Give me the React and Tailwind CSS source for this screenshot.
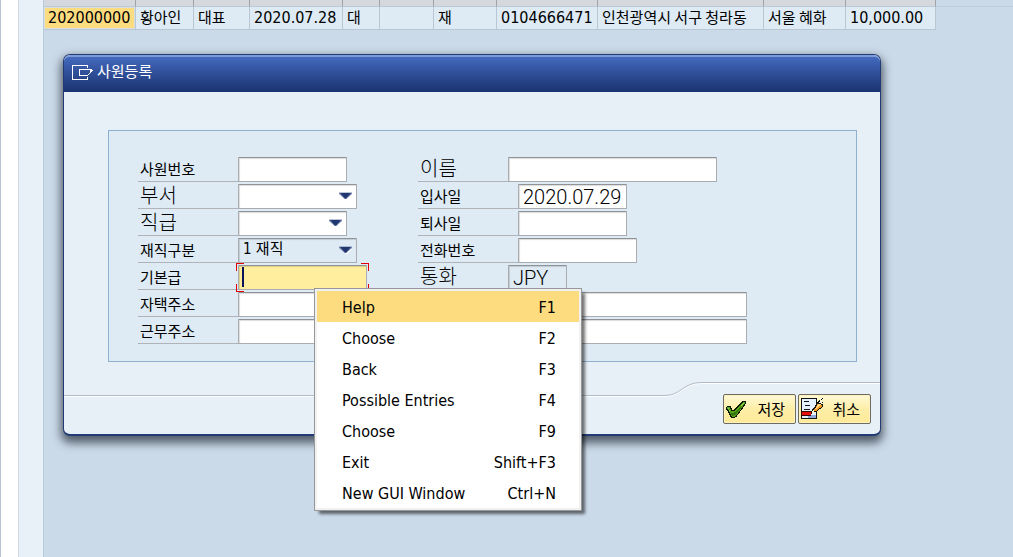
const columns = [
  { id: 'no', width: 'w-[92px]', value: '202000000' },
  { id: 'name', width: 'w-[58px]', value: '황아인', korean: true },
  { id: 'rank', width: 'w-[56px]', value: '대표', korean: true },
  { id: 'joined', width: 'w-[93px]', value: '2020.07.28' },
  { id: 'dept', width: 'w-[37px]', value: '대', korean: true },
  { id: 'left', width: 'w-[54px]', value: '' },
  { id: 'status', width: 'w-[63px]', value: '재', korean: true },
  { id: 'phone', width: 'w-[101px]', value: '0104666471' },
  { id: 'home', width: 'w-[166px]', value: '인천광역시 서구 청라동', korean: true },
  { id: 'office', width: 'w-[82px]', value: '서울 혜화', korean: true },
  { id: 'salary', width: 'w-[90px]', value: '10,000.00' },
];

const menuItems = [
  ['Help', 'F1'],
  ['Choose', 'F2'],
  ['Back', 'F3'],
  ['Possible Entries', 'F4'],
  ['Choose', 'F9'],
  ['Exit', 'Shift+F3'],
  ['New GUI Window', 'Ctrl+N'],
];

const inputStyle =
  "h-[25px] max-w-full rounded-[1px] border border-[#a9adb1] border-t-[#8f9398] px-1 outline-none shadow-[inset_1px_1px_1px_rgba(0,0,0,0.14)]";
const wideLabel = "font-['Noto_Sans_CJK_KR',sans-serif] font-light text-[20px] leading-[22px]";
const wideInput = "font-['Roboto','Noto_Sans_CJK_KR',sans-serif] font-light text-[20px] leading-5";
const small = "font-['Noto_Sans_CJK_KR',sans-serif] text-[15px] leading-6";

function Label({ htmlFor, wide, width = 'w-[100px]', children }) {
  return (
    <label
      htmlFor={htmlFor}
      className={`h-[25px] shrink-0 border-b border-[#b0b4b8] pl-0.5 whitespace-nowrap ${width} ${wide ? wideLabel : small}`}
    >
      {children}
    </label>
  );
}

function TextField({ id, label, wide, labelWidth, width, value = '', tone = 'bg-white' }) {
  return (
    <>
      <Label htmlFor={id} wide={wide} width={labelWidth}>{label}</Label>
      <input id={id} type="text" defaultValue={value} className={`${inputStyle} ${wideInput} ${width} ${tone}`} />
    </>
  );
}

function SelectField({ id, label, wide, width, value = '', tone = 'bg-white' }) {
  return (
    <>
      <Label htmlFor={id} wide={wide}>{label}</Label>
      <div className={`relative ${width}`}>
        <select id={id} className={`block w-full appearance-none pb-1 ${inputStyle} ${tone} font-['DejaVu_Sans_Condensed','Noto_Sans_CJK_KR',sans-serif] text-[15px] leading-5`}>
          <option>{value}</option>
        </select>
        <svg className="pointer-events-none absolute top-2 right-1" width="14" height="8" viewBox="0 0 14 8" aria-hidden="true">
          <path d="M1 2.500h13L8.500 8h-2z" fill="#fff" opacity=".8" />
          <path d="M0 .5h13v1.400L7.300 7H5.700L0 1.900z" fill="#7b8aae" />
          <path d="M1 1h11L7 6.500H6z" fill="#20366f" />
        </svg>
      </div>
    </>
  );
}

function Row({ children, right }) {
  return (
    <div className="flex h-[25px]">
      {right ? <div className="flex w-[280px] shrink-0">{children}</div> : children}
      {right}
    </div>
  );
}

function ContextMenu() {
  return (
    <ul
      role="menu"
      className="absolute top-[23px] left-[76px] z-10 w-[268px] border border-[#979797] bg-white p-0.5 shadow-[4px_4px_3px_-1px_rgba(0,0,0,0.55)] ring-2 ring-inset ring-[#f1f1f1] font-['DejaVu_Sans_Condensed','Noto_Sans',sans-serif] text-base"
    >
      {menuItems.map(([name, key], i) => (
        <li key={key} role="none">
          <button
            type="button"
            role="menuitem"
            className={`flex h-[31px] w-full items-center justify-between pt-0.5 pr-[23px] pl-[25px] ${i === 0 ? 'bg-[#fddc80]' : ''}`}
          >
            <span>{name}</span>
            <span>{key}</span>
          </button>
        </li>
      ))}
    </ul>
  );
}

function WindowIcon() {
  return (
    <svg width="21" height="15" viewBox="0 0 21 15" fill="none" stroke="#fff" shapeRendering="crispEdges" aria-hidden="true">
      <path d="M15.500 3V.5H.5v14h15V12" />
      <path d="M20 4.500H7.500v6H16" />
      <path d="M20.500 5L15.500 10.500M18 5v3" />
    </svg>
  );
}

function CheckIcon() {
  return (
    <svg width="20" height="17" viewBox="0 0 20 17" shapeRendering="crispEdges" aria-hidden="true">
      <path d="M0 6h1V5h4v2h1v2h2V8h1V7h1V6h1V5h1V4h1V3h1V2h1V1h1V0h4v3h-1v2h-1v1h-1v2h-1v1h-1v1h-1v2h-1v1h-1v1h-1v2h-2v1H5v-1H4v-2H3v-2H2v-2H1V9H0z" fill="#0b1803" />
      <path d="M1 6h3v2h1v2h4V9h1V8h1V7h1V6h1V5h1V4h1V3h1V2h1V1h2v2h-1v1h-1v2h-1v1h-1v2h-1v1h-1v1h-1v2h-1v1h-1v1H9v1H6v-1H5v-2H4v-2H3V9H2V8H1z" fill="#57a31a" />
      <path d="M5 12h3v-1h2v-1h1V9h1V8h1V7h1V6h1V5h1v1h-1v2h-1v1h-1v1h-1v1h-1v2h-1v1H8v1H6v-1H5z" fill="#38780e" />
      <path d="M2 7h1v2h1v1H3V8H2zM15 4h1V3h1V2h1v1h-1v1h-1v1h-1z" fill="#9cdd54" />
    </svg>
  );
}

function DocumentPencilIcon() {
  return (
    <svg width="23" height="22" viewBox="0 0 23 22" shapeRendering="crispEdges" aria-hidden="true">
      <path d="M0 0h16v21H0z" fill="#101216" />
      <path d="M1 1h14v19H1z" fill="#e4f0ff" />
      <path d="M10 17h5v3H7v-2h3z" fill="#8fa6d8" />
      <path d="M3 3h5v1H3zM4 7h5v1H4zM3 11h6v1H3z" fill="#111" />
      <path d="M0 13h10v5H0z" fill="#3a0505" />
      <path d="M1 14h9v3H1z" fill="#e80c0c" />
      <path d="M10 16v-3h1v-2h1v-1h1V9h1V7h1V6h1V5h4v1h2v3h-1v1h-1v1h-2v1h-1v1h-1v1h-2v1h-2v1z" fill="#15120b" />
      <path d="M14 10h1V8h1V6h4v1h1v2h-1v1h-2v1h-1v1h-1v1h-3v-2h1z" fill="#f6961f" />
      <path d="M14 10h1V9h1V7h1V6h3v1h-1v1h-1v1h-1v1h-1v1h-2z" fill="#ffd47a" />
      <path d="M11 13h1v-1h1v2h2v1h-3v1h-1z" fill="#fff3d0" />
      <path d="M18 4h1V3h2v2h-3z" fill="#f4f4f4" />
      <path d="M16 5V4h1V3h1V2h1v2h-1v1zM20 2V1h1V0h1v1h-1v1zM21 5V4h1v1z" fill="#111" />
    </svg>
  );
}

function ActionButton({ icon, children }) {
  return (
    <button
      type="button"
      className="flex h-[30px] w-[73px] items-center justify-between rounded-[2px] border border-[#6d6b62] bg-linear-to-b from-[#fff9d6] via-[#fdeea6] to-[#fee998] pr-2.5 pl-0.5 font-['Noto_Sans_CJK_KR',sans-serif] text-[15px] leading-5 shadow-[inset_0_0_0_1px_#fff3bd]"
    >
      {icon}
      <span>{children}</span>
    </button>
  );
}

function EmployeeTable() {
  return (
    <div className="flex">
      <table className="shrink-0 table-fixed border-separate border-spacing-0 text-base leading-5">
        <thead>
          <tr>
            {columns.map((c) => (
              <th key={c.id} aria-label={c.id} className={`h-[7px] border-r border-b border-r-[#9da3aa] border-b-[#bdc9d5] bg-[#d5d9dd] p-0 ${c.width}`} />
            ))}
          </tr>
        </thead>
        <tbody>
          <tr>
            {columns.map((c, i) => (
              <td
                key={c.id}
                className={`h-[23px] border-r border-b border-[#b9c7d4] p-0 pl-1 whitespace-nowrap ${i === 0 ? 'bg-[#fddc80] shadow-[inset_0_0_0_1px_#d9dfdf]' : 'bg-[#deebf5]'} ${c.korean ? "pb-0.5 font-['Noto_Sans_CJK_KR',sans-serif] text-[15px]" : "font-['DejaVu_Sans_Condensed','Noto_Sans',sans-serif]"}`}
              >
                {c.value}
              </td>
            ))}
          </tr>
        </tbody>
      </table>
      <div className="h-[7px] flex-1 border-b border-[#bfccda]" />
    </div>
  );
}

function EmployeeDialog() {
  return (
    <section
      role="dialog"
      aria-labelledby="dialog-title"
      className="mt-6 ml-[19px] w-full max-w-[818px] rounded-[7px] border border-b-2 border-[#233b75] bg-[#e8f0f7] shadow-[0_5px_10px_2px_rgba(30,40,50,0.7)]"
    >
      <header className="flex h-[37px] items-start gap-1 rounded-t-md border-t-2 border-[#7c9bd8] bg-linear-to-b from-[#4469be] to-[#1b3370] pt-2 pl-2 text-white">
        <WindowIcon />
        <h1 id="dialog-title" className="font-['Noto_Sans_CJK_KR',sans-serif] text-[15px] leading-3">사원등록</h1>
      </header>

      <form>
        <div className="mt-[38px] mr-[23px] ml-11 flex flex-col gap-0.5 border border-[#8fb0cf] bg-[#deebf5] pt-[26px] pb-[17px] pl-[29px]">
          <Row right={<TextField id="name" label="이름" wide labelWidth="w-[90px]" width="w-[209px]" />}>
            <TextField id="emp-no" label="사원번호" width="w-[109px]" />
          </Row>
          <Row right={<TextField id="join-date" label="입사일" width="w-[109px]" value="2020.07.29" />}>
            <SelectField id="dept" label="부서" wide width="w-[119px]" />
          </Row>
          <Row right={<TextField id="leave-date" label="퇴사일" width="w-[109px]" />}>
            <SelectField id="rank" label="직급" wide width="w-[109px]" />
          </Row>
          <Row right={<TextField id="phone" label="전화번호" width="w-[119px]" />}>
            <SelectField id="status" label="재직구분" width="w-[119px]" value="1 재직" tone="bg-[#deebf5]" />
          </Row>
          <Row right={<TextField id="currency" label="통화" wide labelWidth="w-[90px]" width="w-[59px]" value="JPY" tone="bg-[#deebf5]" />}>
            <Label htmlFor="salary">기본급</Label>
            <div className="relative w-[129px]">
              <input id="salary" type="text" className={`block w-full ${inputStyle} bg-[#ffee9d]`} />
              <span className="absolute top-0.5 left-1 h-5 w-0.5 bg-[#0a1458]" />
              <span className="absolute -top-0.5 -left-0.5 size-2 border-t border-l border-[#e00000]" />
              <span className="absolute -top-0.5 -right-0.5 size-2 border-t border-r border-[#e00000]" />
              <span className="absolute -bottom-0.5 -left-0.5 size-2 border-b border-l border-[#e00000]" />
              <span className="absolute -right-0.5 -bottom-0.5 size-2 border-r border-b border-[#e00000]" />
              <ContextMenu />
            </div>
          </Row>
          <Row>
            <TextField id="home-address" label="자택주소" width="w-[509px]" />
          </Row>
          <Row>
            <TextField id="office-address" label="근무주소" width="w-[509px]" />
          </Row>
        </div>

        <footer className="mt-5 flex items-start">
          <div className="mt-[13px] h-0.5 flex-1 border-t border-[#b0bccb] bg-white" />
          <svg width="36" height="15" viewBox="0 0 36 15" fill="none" aria-hidden="true">
            <path d="M0 14.500C16 14.500 18 1.500 36 1.500" stroke="#fff" />
            <path d="M0 13.500C16 13.500 18 .5 36 .5" stroke="#b0bccb" />
          </svg>
          <div className="flex gap-0.5 border-t border-[#b0bccb] pt-[11px] pr-[9px] pb-2.5 pl-[22px] shadow-[inset_0_1px_0_#fff]">
            <ActionButton icon={<CheckIcon />}>저장</ActionButton>
            <ActionButton icon={<DocumentPencilIcon />}>취소</ActionButton>
          </div>
        </footer>
      </form>
    </section>
  );
}

export default function App() {
  return (
    <div className="flex min-h-screen bg-[#cbdae9] text-black">
      <div className="w-[19px] shrink-0 border-r border-l border-r-[#cfd9e6] border-l-[#b9c2ce] bg-white" />
      <div className="w-[25px] shrink-0 border-r border-[#bccbda] bg-[#e8f0f8]" />
      <main className="min-w-0 flex-1">
        <EmployeeTable />
        <EmployeeDialog />
      </main>
    </div>
  );
}
